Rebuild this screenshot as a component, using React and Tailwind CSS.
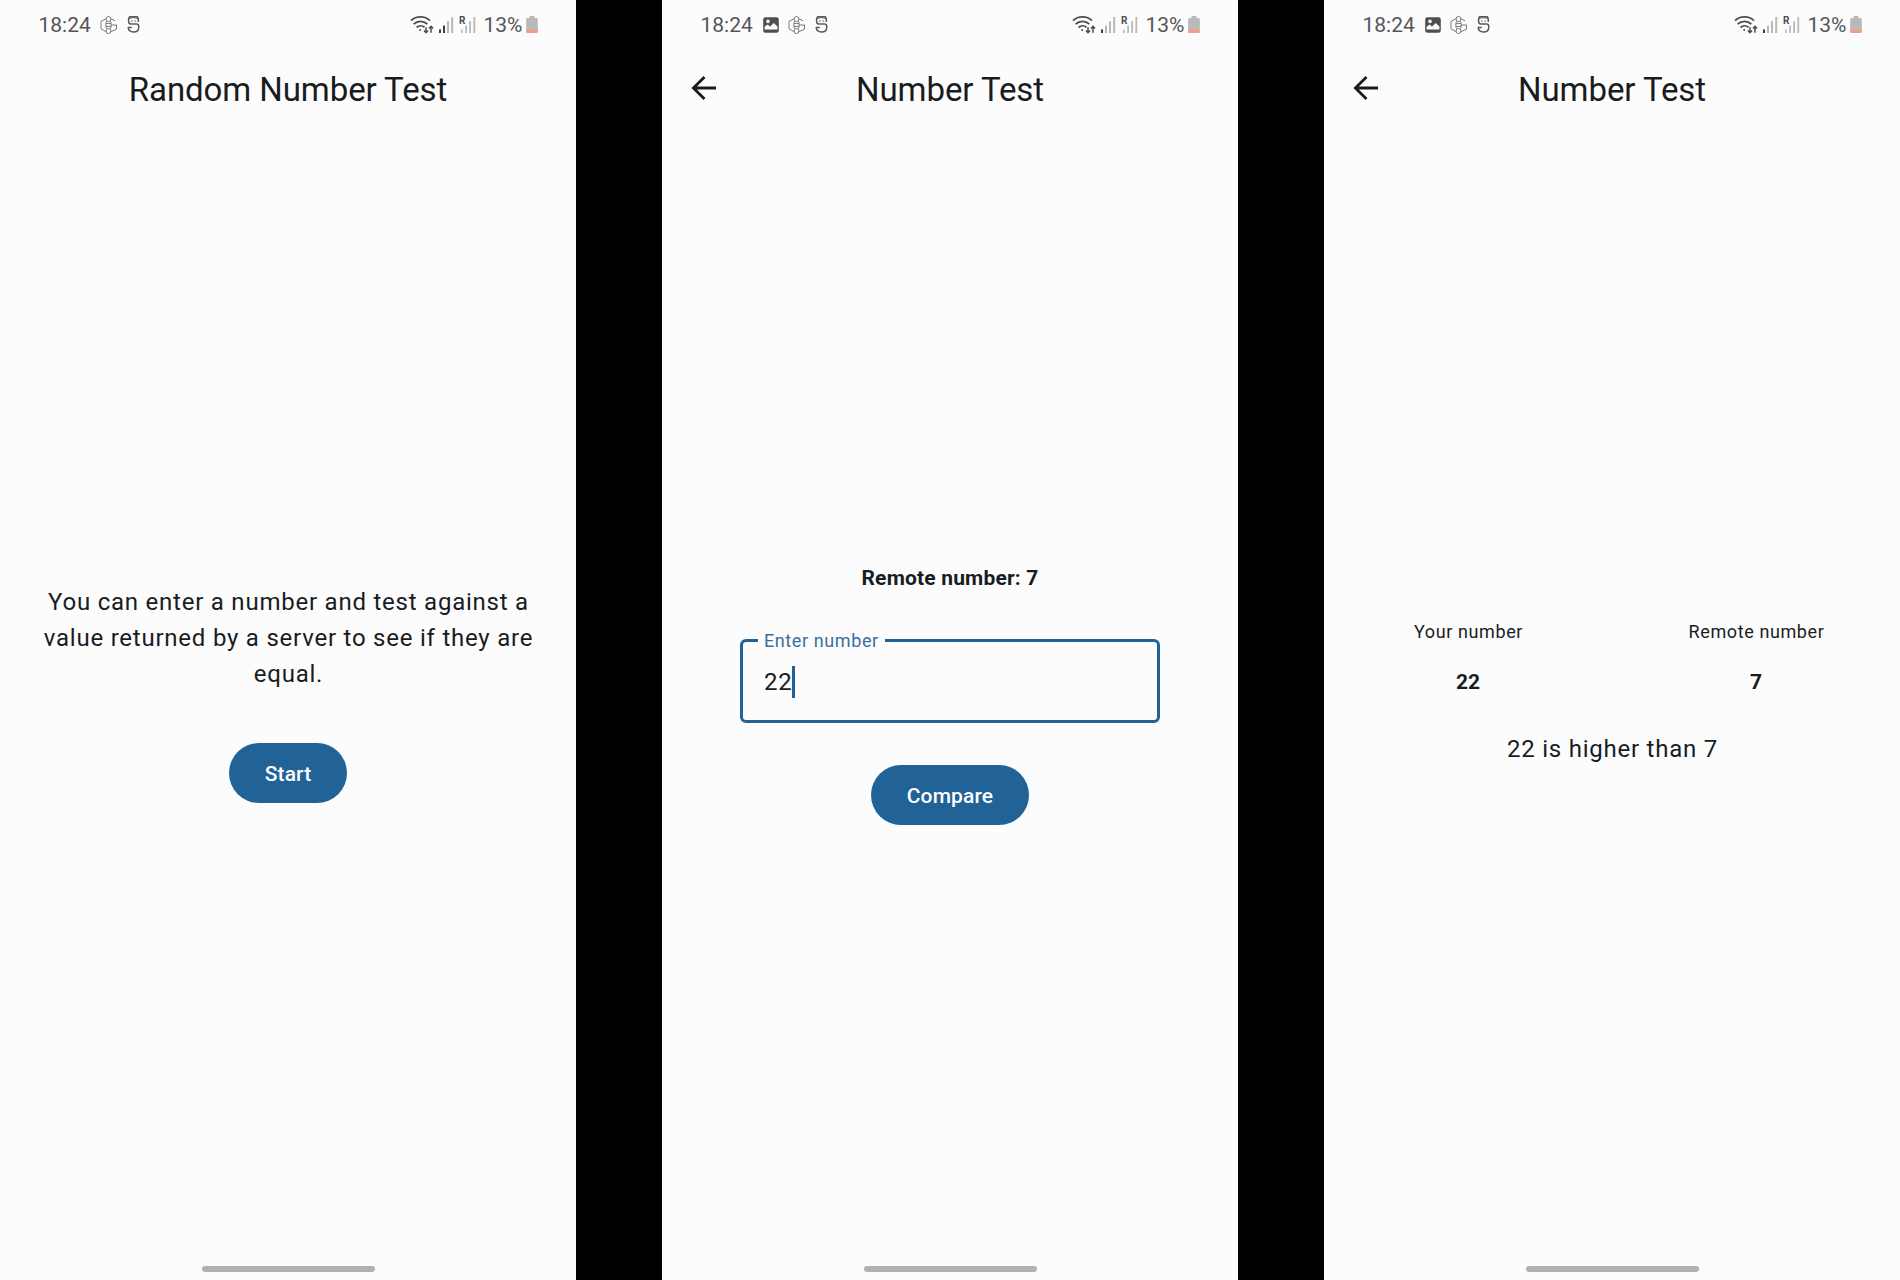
const HexIcon = () => (
  <svg width="17" height="18" viewBox="0 0 17 18" fill="none" stroke="#77787a" strokeWidth="1">
    <path d="M6.300 2.600 1 5.400v7.400l5.200 2.900M10.700 2.600l4.300 2.200M16.500 8.800v4.400l-5.600 2.500M11 9h5.500" />
    <circle cx="8.500" cy="3" r="2.500" />
    <path d="M6.900 5.200c-1.500 1.300-1.500 6.300 0 7.600M10.100 5.200c1.500 1.300 1.500 6.300 0 7.600M6 7.400h5M6 10.400h5" />
    <circle cx="8.500" cy="15" r="2.500" />
  </svg>
);

const MascotIcon = () => (
  <svg width="13" height="17" viewBox="0 0 13 17" fill="none" stroke="#58595b" strokeWidth="1.500">
    <path d="M11.300 6V3.400c0-1.200-.4-2-1-2.600H2.600C2 1.400 1.600 2.200 1.600 3.400v2.200c0 1.500.8 2.400 2.400 2.400h5.400c1.500 0 2.300.8 2.300 2.200v1.200c0 2.800-2.100 4.500-5.200 4.500s-5.200-1.700-5.200-4.400h3.500" />
    <path d="M2 2.600c2-1.200 7-1.200 9 0" strokeWidth="1" />
    <path d="M4.200 5.200h1.200M7.600 5.200h1.200" strokeWidth="1.200" />
  </svg>
);

const PictureIcon = () => (
  <svg width="16" height="16" viewBox="0 0 16 16">
    <rect x=".2" y=".2" width="15.600" height="15.600" rx="2.200" fill="#4d4e50" />
    <circle cx="5" cy="4.400" r="1.800" fill="#fcfcfd" />
    <path d="M1.600 12.400V9.800l3-2.200 2.400 2 3.800-3.600 3.600 3.400v3z" fill="#fcfcfd" />
  </svg>
);

const WifiIcon = () => (
  <svg width="24" height="20" viewBox="0 0 24 20" fill="none" stroke="#4d4e50" strokeWidth="1.800">
    <path d="M1 5.600C6.200.6 14.800.6 20 5.600" />
    <path d="M3.600 9.200c3.900-3.700 9.900-3.700 13.800 0" />
    <path d="M6.600 12.500c2.200-2.100 5.600-2.200 7.900-.2" />
    <circle cx="10.200" cy="15" r="1" fill="#4d4e50" stroke="none" />
    <path d="M16 12.200v5.400M13.900 15.500l2.100 2.200 2.100-2.200M21 17.800v-6M18.900 13.600l2.100-2.200 2.100 2.200" strokeWidth="1.500" />
  </svg>
);

const SignalIcon = ({ strong }) => (
  <svg width="16" height="16" viewBox="0 0 16 16">
    <rect x="0" y="12.400" width="2" height="3.600" fill="#3c3d3f" />
    <rect x="4" y="8.600" width="2" height="7.400" fill={strong ? "#3c3d3f" : "#b9b9ba"} />
    <rect x="8" y="4.200" width="2" height="11.800" fill="#b9b9ba" />
    <rect x="12.200" y="0" width="2" height="16" fill="#b9b9ba" />
  </svg>
);

const RoamingIcon = () => (
  <div className="relative h-4 w-[17px]">
    <svg width="17" height="16" viewBox="0 0 17 16" fill="#b9b9ba">
      <rect x="2" y="12.600" width="1.600" height="3.400" />
      <rect x="6.200" y="8.600" width="1.800" height="7.400" />
      <rect x="10.200" y="4.200" width="1.800" height="11.800" />
      <rect x="14.400" y="0" width="1.800" height="16" />
    </svg>
    <span className="absolute left-0 -top-px text-[10px] leading-[9px] font-bold text-[#4d4e50]">R</span>
  </div>
);

const BatteryIcon = () => (
  <svg width="12" height="18" viewBox="0 0 12 18">
    <path d="M3.600 0h4.800v2H10.600a1.200 1.200 0 0 1 1.200 1.200V15.400a1.600 1.600 0 0 1-1.600 1.600H1.800a1.600 1.600 0 0 1-1.600-1.600V3.200A1.200 1.200 0 0 1 1.400 2H3.600z" fill="#b9b9ba" />
    <path d="M.2 13.600h11.600v1.800a1.600 1.600 0 0 1-1.600 1.600H1.800A1.600 1.600 0 0 1 .2 15.400z" fill="#f59c86" />
  </svg>
);

const StatusBar = ({ picture, strong }) => (
  <div className="flex h-[49px] items-center justify-between pr-[38px] pl-[38.5px] text-[21px] leading-6 text-[#55565a]">
    <div className="flex items-center">
      <span className="w-[53.5px]">18:24</span>
      {picture && (
        <span className="ml-[9px]">
          <PictureIcon />
        </span>
      )}
      <span className={picture ? "ml-[9px]" : "ml-2"}>
        <HexIcon />
      </span>
      <span className="ml-[10px]">
        <MascotIcon />
      </span>
    </div>
    <div className="flex items-center">
      <WifiIcon />
      <span className="ml-[5px]">
        <SignalIcon strong={strong} />
      </span>
      <span className="ml-1">
        <RoamingIcon />
      </span>
      <span className="ml-[7.5px] w-[42.5px]">13%</span>
      <BatteryIcon />
    </div>
  </div>
);

const Phone = ({ title, back, strong, children }) => (
  <section className="flex h-full w-[576px] flex-col bg-[#fcfcfd]">
    <StatusBar picture={back} strong={strong} />
    <header className="grid h-[81px] grid-cols-[72px_1fr_72px] items-center">
      <div className="pb-[3px] pl-[29px]">
        {back && (
          <svg width="26" height="26" viewBox="0 0 26 26" fill="none" stroke="#191c1e" strokeWidth="2.800">
            <path d="M25 13H3M13.500 2 2.400 13l11.100 11" />
          </svg>
        )}
      </div>
      <h1 className="text-center text-[33px] leading-[42px] tracking-[-0.08px]">{title}</h1>
    </header>
    <main className="flex flex-1 flex-col items-center">{children}</main>
    <footer className="flex h-6 justify-center pt-[10px]">
      <div className="h-1.5 w-[173px] rounded-full bg-[#b0b0b0]" />
    </footer>
  </section>
);

const Button = ({ children }) => (
  <button className="h-[60px] rounded-full bg-[#216297] px-9 pt-[3px] text-[21px] font-medium tracking-[0.15px] text-white">
    {children}
  </button>
);

export default function App() {
  return (
    <div className="flex h-[1280px] w-[1900px] justify-between overflow-hidden bg-black font-['Roboto',sans-serif] text-[#191c1e]">
      <Phone title="Random Number Test" strong>
        <p className="mt-[454px] w-[500px] pl-px text-center text-2xl leading-9 tracking-[0.77px]">
          You can enter a number and test against a value returned by a server to see if they are equal.
        </p>
        <div className="mt-[51px]">
          <Button>Start</Button>
        </div>
      </Phone>

      <Phone title="Number Test" back>
        <p className="mt-[433px] text-[21px] leading-[30px] font-bold tracking-[0.17px]">Remote number: 7</p>
        <fieldset className="mt-[38px] h-[92px] w-[420px] rounded-[6px] border-3 border-[#216297] pl-[15px]">
          <legend className="h-[18px] px-1.5 text-lg leading-[19px] tracking-[0.6px] text-[#3a6ea0]">Enter number</legend>
          <div className="flex items-center pt-[17px] pl-1.5 text-2xl leading-8 tracking-[0.75px]">
            22
            <span className="h-8 w-[3px] bg-[#216297]" />
          </div>
        </fieldset>
        <div className="mt-[42px]">
          <Button>Compare</Button>
        </div>
      </Phone>

      <Phone title="Number Test" back>
        <div className="mt-[490px] grid w-full grid-cols-2 text-center">
          <div>
            <div className="pl-px text-lg leading-6 tracking-[0.6px]">Your number</div>
            <div className="mt-[23px] text-[21px] leading-[30px] font-bold">22</div>
          </div>
          <div>
            <div className="pl-px text-lg leading-6 tracking-[0.6px]">Remote number</div>
            <div className="mt-[23px] text-[21px] leading-[30px] font-bold">7</div>
          </div>
        </div>
        <p className="mt-[34px] pl-px text-2xl leading-9 tracking-[0.77px]">22 is higher than 7</p>
      </Phone>
    </div>
  );
}
